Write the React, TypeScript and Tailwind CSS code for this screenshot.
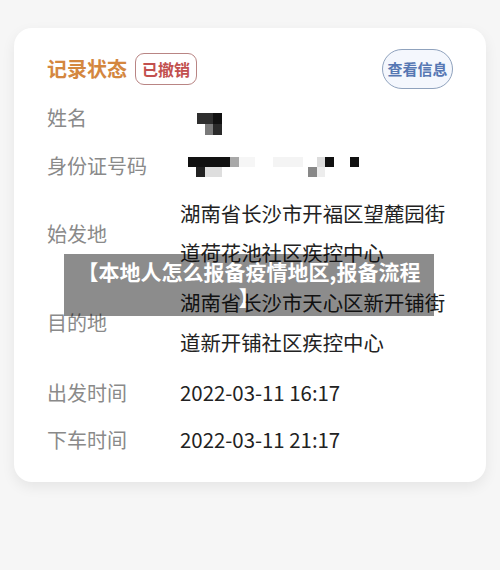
const font = { fontFamily: '"Noto Sans CJK SC", "Noto Sans", sans-serif' }

function NameMosaic() {
  return (
    <svg width="26" height="22" viewBox="0 0 26 22" className="mt-[15px] ml-[17px]">
      <rect x="0" y="0" width="16" height="11" fill="#2e2e2e" />
      <rect x="16" y="0" width="9" height="11" fill="#111" />
      <rect x="8" y="11" width="8" height="11" fill="#7a7a7a" />
      <rect x="16" y="11" width="9" height="11" fill="#2a2a2a" />
    </svg>
  )
}

function IdMosaic() {
  return (
    <svg width="175" height="20" viewBox="0 0 175 20" className="mt-[11px] ml-[8px]">
      <rect x="0" y="0" width="42" height="10" fill="#111" />
      <rect x="42" y="0" width="9" height="10" fill="#a8a8a8" />
      <rect x="51" y="0" width="16" height="10" fill="#f6f6f6" />
      <rect x="85" y="0" width="30" height="10" fill="#f4f4f4" />
      <rect x="129" y="0" width="8" height="10" fill="#dcdcdc" />
      <rect x="137" y="0" width="9" height="10" fill="#111" />
      <rect x="162" y="0" width="9" height="10" fill="#111" />
      <rect x="8" y="10" width="9" height="10" fill="#222" />
      <rect x="17" y="10" width="17" height="10" fill="#dedede" />
      <rect x="120" y="10" width="9" height="10" fill="#888" />
      <rect x="129" y="10" width="8" height="10" fill="#ededed" />
    </svg>
  )
}

function Row({ label, children, className = '' }: { label: string; children: React.ReactNode; className?: string }) {
  return (
    <div className={`flex ${className}`}>
      <div className="w-[133px] shrink-0 self-center text-[20px] leading-[39px] text-[#8a8a8a]">{label}</div>
      <div className="flex-1 text-[20.4px] leading-[39px] text-[#222]">{children}</div>
    </div>
  )
}

export default function App() {
  return (
    <div className="relative h-[570px] w-[500px] bg-[#f6f6f6] pt-[28px]" style={font}>
      {/* record card */}
      <div className="mx-[14px] h-[454px] rounded-[18px] bg-white pl-[33px] pr-[20px] pt-[21px] shadow-[0_5px_14px_rgba(0,0,0,0.07)]">
        <div className="flex h-[40px] items-center pr-[13px]">
          <span className="text-[20px] font-bold text-[#d4873f]">记录状态</span>
          <span className="ml-[8px] flex h-[32px] items-center rounded-[9px] border-[1.5px] border-[#b98584] px-[6px] text-[16px] font-bold text-[#c2504e]">
            已撤销
          </span>
          <button className="ml-auto flex h-[40px] w-[71px] items-center justify-center rounded-full border-[1.5px] border-[#8fa2bd] bg-[#f4f7fd] text-[15px] font-bold text-[#5677b3]">
            查看信息
          </button>
        </div>

        <Row label="姓名" className="mt-[9px]">
          <div className="flex h-[39px]">
            <NameMosaic />
          </div>
        </Row>
        <Row label="身份证号码" className="mt-[9px]">
          <div className="flex h-[39px]">
            <IdMosaic />
          </div>
        </Row>
        <Row label="始发地" className="mt-[9px]">
          湖南省长沙市开福区望麓园街
          <br />
          道荷花池社区疾控中心
        </Row>
        <Row label="目的地" className="mt-[10px]">
          <div className="leading-[40px]">
            湖南省长沙市天心区新开铺街
            <br />
            道新开铺社区疾控中心
          </div>
        </Row>
        <Row label="出发时间" className="mt-[11px]">2022-03-11 16:17</Row>
        <Row label="下车时间" className="mt-[8px]">2022-03-11 21:17</Row>
      </div>

      {/* caption banner over the card */}
      <div className="absolute left-[64px] top-[254px] h-[62px] w-[370px] bg-[rgba(0,0,0,0.45)] pt-[4px] text-center text-[21px] font-bold leading-[26px] text-white">
        <div className="whitespace-nowrap">【本地人怎么报备疫情地区,报备流程</div>
        <div>】</div>
      </div>
    </div>
  )
}
